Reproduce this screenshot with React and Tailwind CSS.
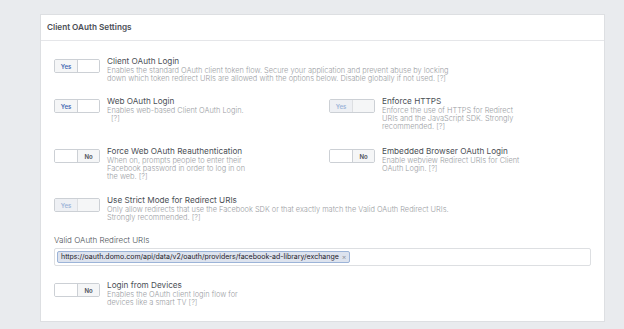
const Toggle = ({ on, disabled }) => {
  if (on) {
    return (
      <div className="mt-[3px] flex h-[14px] w-[46px] shrink-0 overflow-hidden rounded-[2px] border border-[#ccd0d5]">
        <div
          className={
            disabled
              ? "flex w-[23px] items-center justify-center border-r border-[#dddfe2] bg-[#eef0f4] text-[6px] font-semibold text-[#9cb4d8]"
              : "flex w-[23px] items-center justify-center border-r border-[#ccd0d5] bg-[#f5f6f7] text-[6px] font-semibold text-[#4267b2]"
          }
        >
          Yes
        </div>
        <div className={disabled ? "flex-1 bg-[#f5f6f7]" : "flex-1 bg-white"} />
      </div>
    );
  }
  return (
    <div className="mt-[3px] flex h-[14px] w-[46px] shrink-0 overflow-hidden rounded-[2px] border border-[#ccd0d5]">
      <div className="w-[23px] border-r border-[#ccd0d5] bg-white" />
      <div className="flex flex-1 items-center justify-center bg-[#f5f6f7] text-[6px] font-semibold text-[#4b4f56]">
        No
      </div>
    </div>
  );
};

const Setting = ({ on, disabled, title, lines }) => (
  <div className="flex items-start gap-[7px]">
    <Toggle on={on} disabled={disabled} />
    <div>
      <div className="text-[8.2px] leading-[10px] text-[#4b4f56]">{title}</div>
      <div className="mt-[1px] text-[7.4px] font-light leading-[8px] text-[#9a9da3]">
        {lines.map((l, i) => (
          <div key={i}>{l}</div>
        ))}
      </div>
    </div>
  </div>
);

export default function App() {
  return (
    <div className="h-[329px] w-[624px] overflow-hidden bg-[#e9ebee] pl-[40px] pt-[14px] font-['Inter',sans-serif]">
      <div className="h-[308px] w-[565px] border border-[#dddfe2] bg-white">
        <div className="flex h-[26px] items-center border-b border-[#e5e6e9] pl-[6px] text-[8.2px] font-semibold text-[#4b4f56]">
          Client OAuth Settings
        </div>

        <div className="flex flex-col pl-[13px] pt-[15px]">
          <Setting
            on
            title="Client OAuth Login"
            lines={[
              "Enables the standard OAuth client token flow. Secure your application and prevent abuse by locking",
              "down which token redirect URIs are allowed with the options below. Disable globally if not used.  [?]",
            ]}
          />

          <div className="mt-[13px] grid grid-cols-[275px_1fr]">
            <Setting
              on
              title="Web OAuth Login"
              lines={["Enables web-based Client OAuth Login.", <span className="pl-[4px]">[?]</span>]}
            />
            <Setting
              on
              disabled
              title="Enforce HTTPS"
              lines={[
                "Enforce the use of HTTPS for Redirect",
                "URIs and the JavaScript SDK. Strongly",
                "recommended.  [?]",
              ]}
            />
          </div>

          <div className="mt-[15px] grid grid-cols-[275px_1fr]">
            <Setting
              title="Force Web OAuth Reauthentication"
              lines={[
                "When on, prompts people to enter their",
                "Facebook password in order to log in on",
                "the web.  [?]",
              ]}
            />
            <Setting
              title="Embedded Browser OAuth Login"
              lines={["Enable webview Redirect URIs for Client", "OAuth Login.  [?]"]}
            />
          </div>

          <div className="mt-[14px]">
            <Setting
              on
              disabled
              title="Use Strict Mode for Redirect URIs"
              lines={[
                "Only allow redirects that use the Facebook SDK or that exactly match the Valid OAuth Redirect URIs.",
                "Strongly recommended.  [?]",
              ]}
            />
          </div>

          <div className="mt-[13px] text-[8px] font-light leading-[10px] text-[#4b4f56]">Valid OAuth Redirect URIs</div>
          <div className="mt-[3px] flex h-[18px] w-[537px] items-center rounded-[2px] border border-[#dddfe2] px-[2px]">
            <div className="flex h-[12px] items-center gap-[3px] rounded-[2px] border border-[#9cb4d8] bg-[#dde3ee] px-[3px] text-[7px] text-[#1d2129]">
              https://oauth.domo.com/api/data/v2/oauth/providers/facebook-ad-library/exchange
              <span className="text-[7px] text-[#90949c]">×</span>
            </div>
          </div>

          <div className="mt-[14px]">
            <Setting
              title="Login from Devices"
              lines={["Enables the OAuth client login flow for", "devices like a smart TV  [?]"]}
            />
          </div>
        </div>
      </div>
    </div>
  );
}
